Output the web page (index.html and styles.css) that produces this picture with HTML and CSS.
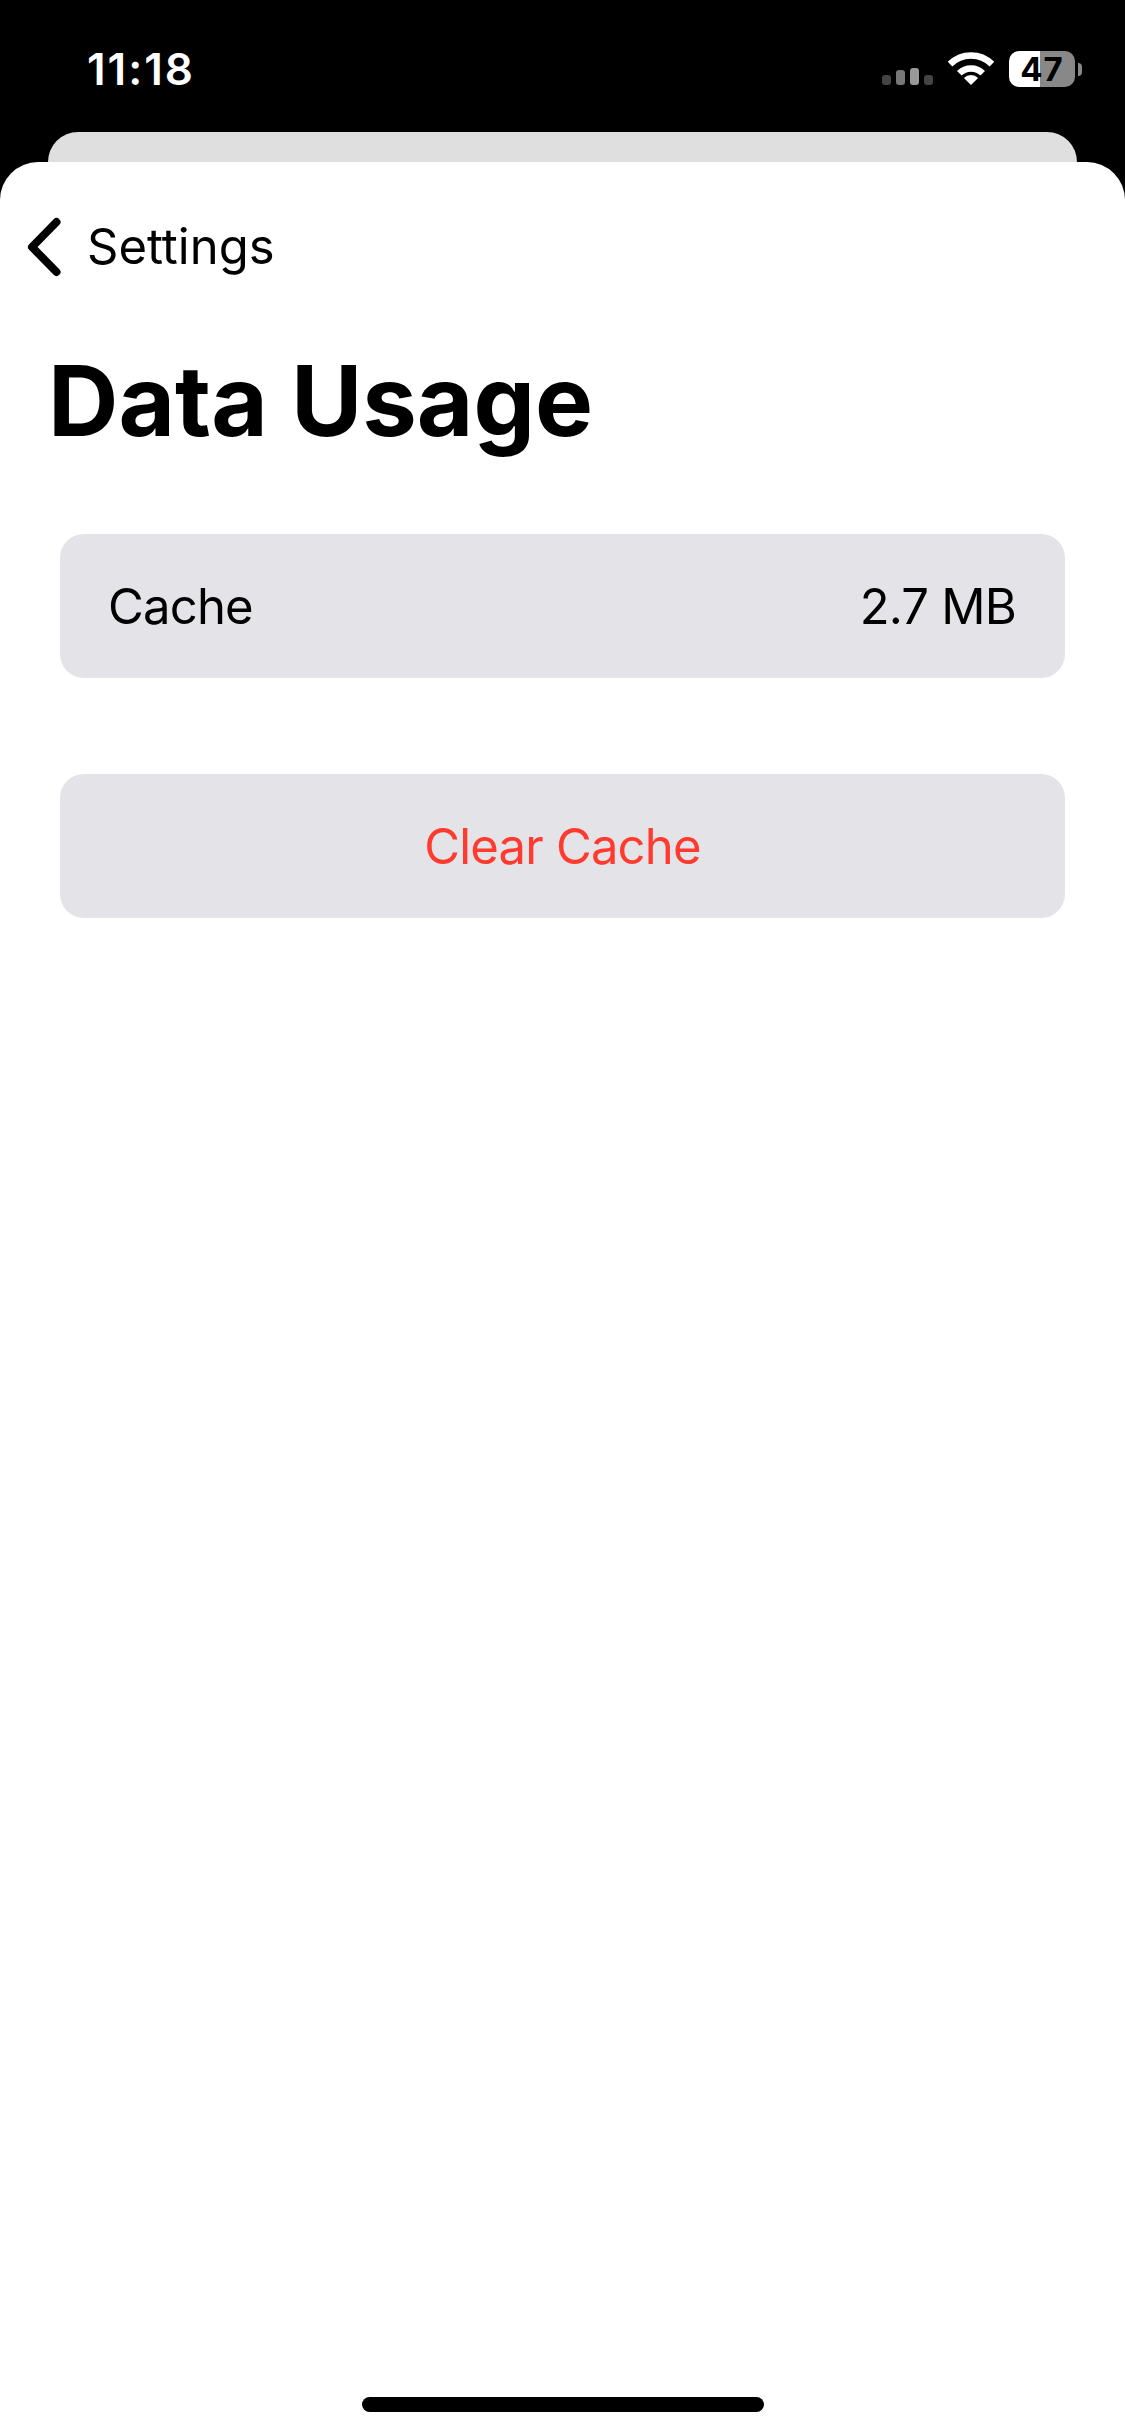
FILE: index.html
```html
<!DOCTYPE html>
<html lang="en">
<head>
<meta charset="utf-8">
<title>Data Usage</title>
<link rel="stylesheet" href="styles.css">
</head>
<body>
<div class="phone">
  <header class="status">
    <span class="time">11:18</span>
    <div class="status-icons">
      <div class="signal">
        <i class="bar bar-1"></i><i class="bar bar-2"></i><i class="bar bar-3"></i><i class="bar bar-4"></i>
      </div>
      <svg class="wifi" viewBox="0 0 46 33" width="46" height="33" aria-hidden="true">
        <path d="M2.1 12.1 A29.5 29.5 0 0 1 43.9 12.1" fill="none" stroke="#fff" stroke-width="6.5"/>
        <path d="M11.3 21.3 A16.5 16.5 0 0 1 34.7 21.3" fill="none" stroke="#fff" stroke-width="6.5"/>
        <path d="M23 33 L15.9 25.9 A10 10 0 0 1 30.1 25.9 Z" fill="#fff"/>
      </svg>
      <div class="battery-wrap">
        <div class="battery">47</div>
        <i class="battery-nub"></i>
      </div>
    </div>
  </header>
  <div class="back-layer"></div>
  <main class="sheet">
    <nav class="nav">
      <svg class="chevron" viewBox="0 0 36 60" width="36" height="60" aria-hidden="true">
        <path d="M30.5 5 L6 30 L30.5 55" fill="none" stroke="#000" stroke-width="8" stroke-linecap="round" stroke-linejoin="round"/>
      </svg>
      <span class="nav-label">Settings</span>
    </nav>
    <h1 class="title">Data Usage</h1>
    <section class="card row">
      <span>Cache</span>
      <span>2.7 MB</span>
    </section>
    <section class="card action">Clear Cache</section>
    <div class="home-bar"></div>
  </main>
</div>
</body>
</html>
```
FILE: styles.css
```css
* { box-sizing: border-box; }
html, body { margin: 0; padding: 0; }
body { background: #000; font-family: Inter, "Liberation Sans", sans-serif; }
.phone { width: 1125px; height: 2436px; display: flex; flex-direction: column; overflow: hidden; background: #000; }

.status { height: 132px; flex: none; display: flex; align-items: flex-start; justify-content: space-between; padding: 43px 43px 0 87px; color: #fff; }
.time { font-size: 44px; line-height: 52px; font-weight: 600; letter-spacing: 2px; }
.status-icons { display: flex; align-items: flex-start; padding-top: 8px; }

.signal { display: flex; align-items: flex-end; gap: 5px; height: 34px; margin-right: 15px; }
.bar { display: block; width: 9px; border-radius: 3px; }
.bar-1 { height: 10px; background: #444; }
.bar-2 { height: 15px; background: #777; }
.bar-3 { height: 17px; background: #999; }
.bar-4 { height: 10px; background: #444; }

.wifi { margin-right: 15px; margin-top: 1px; }

.battery-wrap { display: flex; align-items: center; gap: 3px; }
.battery { width: 66px; height: 36px; border-radius: 10px; background: linear-gradient(90deg, #fff 0 47%, #888 47% 100%); color: #000; font-size: 33px; line-height: 36px; font-weight: 700; text-align: center; letter-spacing: 1px; }
.battery-nub { display: block; width: 4px; height: 13px; border-radius: 0 4px 4px 0; background: #888; }

.back-layer { height: 30px; flex: none; margin: 0 48px; background: #dfdfdf; border-radius: 30px 30px 0 0; }

.sheet { flex: 1; display: flex; flex-direction: column; background: #fff; border-radius: 38px 38px 0 0; padding: 50px 60px 0; }

.nav { display: flex; align-items: center; height: 70px; margin-left: -34px; }
.chevron { flex: none; margin-right: 25px; }
.nav-label { font-size: 49px; line-height: 68px; color: #000; }

.title { margin: 63px 0 77px -12px; font-size: 97.5px; line-height: 112px; font-weight: 700; color: #000; }

.card { height: 144px; background: #e3e3e8; border-radius: 24px; font-size: 49px; letter-spacing: -0.8px; color: #000; display: flex; align-items: center; }
.row { justify-content: space-between; padding: 0 49px 0 48px; }
.action { justify-content: center; margin-top: 96px; color: #ff3b30; }

.home-bar { width: 402px; height: 15px; flex: none; margin: auto auto 24px; background: #000; border-radius: 8px; }
```
